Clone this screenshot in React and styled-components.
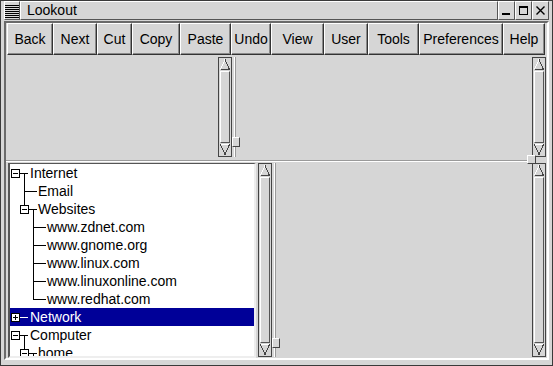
import React from 'react'
import styled, { createGlobalStyle } from 'styled-components'

const bg = '#d6d6d6'

const Global = createGlobalStyle`
	html, body { margin: 0; padding: 0; background: ${bg}; }
	body { font-family: "Liberation Sans", Arial, sans-serif; font-size: 14px; color: #000; }
`

const Window = styled.div`
	width: 553px;
	height: 366px;
	box-sizing: border-box;
	border: 1px solid #3a3a3a;
	padding: 0 3px 5px 3px;
	background: ${bg};
	display: flex;
	flex-direction: column;
`
const TitleBar = styled.div`
	display: flex;
	height: 19px;
`
const Bevel = styled.div`
	box-sizing: border-box;
	border: 1px solid;
	border-color: #fff #555 #555 #fff;
	background: ${bg};
`
const MenuBtn = styled(Bevel)`
	width: 16px;
	display: flex;
	align-items: center;
	justify-content: center;
`
const TitleLabel = styled(Bevel)`
	flex: 1;
	padding-left: 6px;
	line-height: 17px;
	font-size: 14px;
`
const WinBtn = styled(Bevel)`
	width: 17px;
	display: flex;
	align-items: center;
	justify-content: center;
`
const Frame = styled.div`
	margin-top: 1px;
	flex: 1;
	border: 2px solid;
	border-color: #6a6a6a #fff #fff #6a6a6a;
	display: flex;
	flex-direction: column;
`
const Toolbar = styled.div`
	display: flex;
	height: 34px;
	padding-left: 1px;
	box-sizing: border-box;
`
const ToolButton = styled.button`
	width: ${p => p.w}px;
	height: 32px;
	margin: 0;
	padding: 0;
	box-sizing: border-box;
	border: 1px solid;
	border-color: #fff #333 #333 #fff;
	box-shadow: inset -1px -1px #8a8a8a;
	background: ${bg};
	font-family: inherit;
	font-size: 14px;
	color: #000;
	text-align: center;
`
const Pane = styled.div`
	display: flex;
	height: ${p => p.h}px;
	align-items: flex-start;
	padding-right: 1px;
`
const Blank = styled.div`
	width: ${p => (p.w ? p.w + 'px' : 'auto')};
	flex: ${p => (p.w ? 'none' : 1)};
`
const Scroll = styled.div`
	width: 14px;
	height: ${p => p.h}px;
	box-sizing: border-box;
	border: 1px solid #444;
	display: flex;
	flex-direction: column;
`
const Thumb = styled.div`
	flex: 1;
	box-sizing: border-box;
	border: 1px solid;
	border-color: #fff #555 #555 #fff;
	margin: 0 1px;
`
const VSash = styled.div`
	position: relative;
	width: 6px;
	height: ${p => p.h}px;
	display: flex;
	justify-content: center;
`
const VGroove = styled.div`
	width: 0;
	border-left: 1px solid #fff;
	border-right: 1px solid #9a9a9a;
`
const SashHandle = styled(Bevel)`
	position: absolute;
	left: 0;
	top: ${p => p.top}px;
	width: 8px;
	height: 10px;
	border-color: #fff #444 #444 #fff;
`
const HSash = styled.div`
	position: relative;
	height: 5px;
	display: flex;
	align-items: center;
`
const HGroove = styled.div`
	width: 521px;
	height: 0;
	border-top: 1px solid #9a9a9a;
	border-bottom: 1px solid #fff;
`
const HHandle = styled(Bevel)`
	position: absolute;
	left: 521px;
	top: -3px;
	width: 9px;
	height: 9px;
	border-color: #fff #444 #444 #fff;
`
const TreeList = styled.div`
	margin: 0 2px;
	width: 248px;
	height: 195px;
	box-sizing: border-box;
	border: 2px solid;
	border-top-width: 1px;
	border-color: #555 #eee #eee #555;
	background: #fff;
	overflow: hidden;
`
const Row = styled.div`
	display: flex;
	height: 18px;
	line-height: 18px;
	background: ${p => (p.selected ? '#000098' : 'transparent')};
	color: ${p => (p.selected ? '#fff' : '#000')};
	white-space: nowrap;
`
const Guides = styled.svg`
	flex: none;
	display: block;
`

const Arrow = ({ down }) => (
	<svg width="12" height="13" style={{ display: 'block' }} shapeRendering="crispEdges">
		{down ? (
			<>
				<path d="M1.5 1.5H10.5L6 11.5" fill="none" stroke="#fff" />
				<path d="M6 11.5L10.5 1.5" fill="none" stroke="#444" />
				<path d="M1.5 1.5L6 11.5" fill="none" stroke="#444" />
			</>
		) : (
			<>
				<path d="M1.5 11.5L6 1.5" fill="none" stroke="#fff" />
				<path d="M6 1.5L10.5 11.5H1.5" fill="none" stroke="#444" />
			</>
		)}
	</svg>
)

const ScrollBar = ({ h }) => (
	<Scroll h={h}>
		<Arrow />
		<Thumb />
		<Arrow down />
	</Scroll>
)

const ExpandBox = ({ x, open }) => (
	<>
		<rect x={x + 0.5} y="5.5" width="8" height="8" fill="#fff" stroke="#000" />
		<path d={`M${x + 2} 9.5H${x + 7}`} stroke="#000" />
		{!open && <path d={`M${x + 4.5} 7V12`} stroke="#000" />}
	</>
)

const tree = [
	{ label: 'Internet', w: 20, box: { x: 1, open: true }, d: 'M10 9.5H18M14.5 9.5V18' },
	{ label: 'Email', w: 28, d: 'M14.5 0V18M14.5 9.5H27' },
	{ label: 'Websites', w: 28, box: { x: 10, open: true }, d: 'M14.5 0V5M19 9.5H27M23.5 9.5V18' },
	{ label: 'www.zdnet.com', w: 37, d: 'M23.5 0V18M23.5 9.5H36' },
	{ label: 'www.gnome.org', w: 37, d: 'M23.5 0V18M23.5 9.5H36' },
	{ label: 'www.linux.com', w: 37, d: 'M23.5 0V18M23.5 9.5H36' },
	{ label: 'www.linuxonline.com', w: 37, d: 'M23.5 0V18M23.5 9.5H36' },
	{ label: 'www.redhat.com', w: 37, d: 'M23.5 0V9.5M23.5 9.5H36' },
	{ label: 'Network', w: 20, box: { x: 1, open: false }, d: 'M10 9.5H18', selected: true },
	{ label: 'Computer', w: 20, box: { x: 1, open: true }, d: 'M10 9.5H18M14.5 9.5V18' },
	{ label: 'home', w: 28, box: { x: 10, open: true }, d: 'M14.5 0V5M19 9.5H27M23.5 9.5V18' },
]

const tools = [
	['Back', 46], ['Next', 44], ['Cut', 35], ['Copy', 48], ['Paste', 51], ['Undo', 40],
	['View', 53], ['User', 44], ['Tools', 51], ['Preferences', 84], ['Help', 42],
]

export default function App() {
	return (
		<>
			<Global />
			<Window>
				<TitleBar>
					<MenuBtn>
						<svg width="14" height="14" shapeRendering="crispEdges">
							<path d="M0 1.5H14M0 3.5H14M0 5.5H14M0 7.5H14M0 9.5H14M0 11.5H14M0 13.5H14" stroke="#000" />
						</svg>
					</MenuBtn>
					<TitleLabel>Lookout</TitleLabel>
					<WinBtn>
						<svg width="11" height="11" shapeRendering="crispEdges">
							<rect x="1" y="8" width="8" height="2" fill="#000" />
						</svg>
					</WinBtn>
					<WinBtn>
						<svg width="11" height="11" shapeRendering="crispEdges">
							<rect x="1.5" y="1.5" width="8" height="8" fill="none" stroke="#000" />
							<rect x="1" y="1" width="9" height="2" fill="#000" />
						</svg>
					</WinBtn>
					<WinBtn>
						<svg width="11" height="11">
							<path d="M1.5 1.5L9.5 9.5M9.5 1.5L1.5 9.5" stroke="#000" strokeWidth="1.4" />
						</svg>
					</WinBtn>
				</TitleBar>
				<Frame>
					<Toolbar>
						{tools.map(([name, w]) => (
							<ToolButton key={name} w={w}>{name}</ToolButton>
						))}
					</Toolbar>
					<Pane h={101}>
						<Blank w={212} />
						<ScrollBar h={100} />
						<VSash h={100}>
							<VGroove />
							<SashHandle top={80} />
						</VSash>
						<Blank />
						<ScrollBar h={100} />
					</Pane>
					<HSash>
						<HGroove />
						<HHandle />
					</HSash>
					<Pane h={195}>
						<TreeList>
							{tree.map(r => (
								<Row key={r.label} selected={r.selected}>
									<Guides width={r.w} height="18" shapeRendering="crispEdges">
										<path d={r.d} fill="none" stroke={r.selected ? '#fff' : '#000'} />
										{r.box && <ExpandBox x={r.box.x} open={r.box.open} />}
									</Guides>
									<span>{r.label}</span>
								</Row>
							))}
						</TreeList>
						<ScrollBar h={194} />
						<VSash h={194}>
							<VGroove />
							<SashHandle top={175} />
						</VSash>
						<Blank />
						<ScrollBar h={194} />
					</Pane>
				</Frame>
			</Window>
		</>
	)
}
